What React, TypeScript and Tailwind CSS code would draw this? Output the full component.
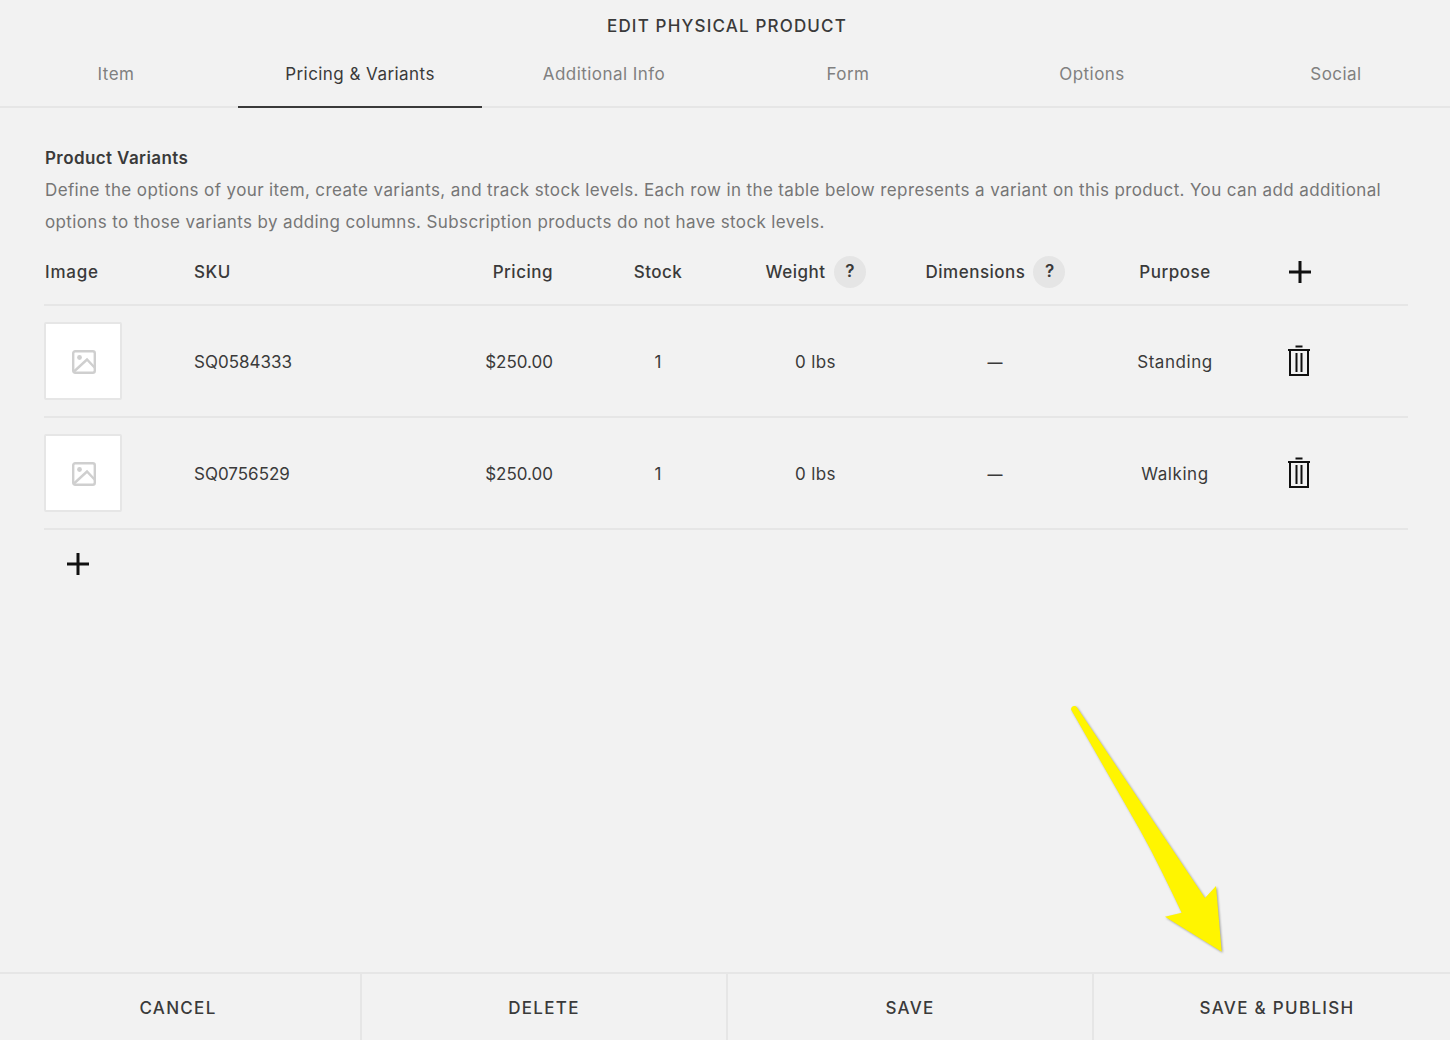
const tabs = ["Item", "Pricing & Variants", "Additional Info", "Form", "Options", "Social"];

const variants = [
  { sku: "SQ0584333", price: "$250.00", stock: "1", weight: "0 lbs", purpose: "Standing" },
  { sku: "SQ0756529", price: "$250.00", stock: "1", weight: "0 lbs", purpose: "Walking" },
];

const COLS = "grid grid-cols-[150px_200px_159px_210px_104px_256px_104px_144px] items-center";

function PlusIcon() {
  return (
    <svg width="24" height="24" viewBox="0 0 24 24" className="block">
      <path d="M1 12H23M12 1V23" stroke="#111" strokeWidth="3" fill="none" />
    </svg>
  );
}

function TrashIcon() {
  return (
    <svg width="24" height="32" viewBox="0 0 24 32" className="block">
      <path d="M8.5 1.5H15.5M1 5H23M3 5V30H21V5M9.5 8V27M14.5 8V27" stroke="#111" strokeWidth="2" fill="none" />
    </svg>
  );
}

function ImageIcon() {
  return (
    <svg width="24" height="24" viewBox="0 0 24 24" className="block">
      <rect x="1.2" y="1.2" width="21.6" height="21.6" rx="2" stroke="#cfcfcf" strokeWidth="2.4" fill="none" />
      <circle cx="7.5" cy="7.5" r="2.4" fill="#cfcfcf" />
      <path d="M2 21.5L15 9.5L23 18" stroke="#cfcfcf" strokeWidth="2.4" fill="none" />
    </svg>
  );
}

function HelpBadge() {
  return (
    <span className="flex h-8 w-8 items-center justify-center rounded-full bg-[#e5e5e5] pl-[1px] text-[17px] font-semibold text-[#3a3a3a]">
      ?
    </span>
  );
}

function Arrow() {
  return (
    <svg width="180" height="270" viewBox="0 0 180 270" className="absolute left-[1060px] top-[700px] drop-shadow-[1px_1px_1px_rgba(0,0,0,0.35)]">
      <path
        d="M11 9.5C11 6 15 5 17 7.5L145 198L156 186L161.7 251.7L105 216.7L121.7 212.7C108 184 95 157 80 130L11 9.5Z"
        fill="#fff500"
      />
    </svg>
  );
}

export default function App() {
  return (
    <div className="relative flex h-[1040px] w-[1450px] flex-col overflow-hidden bg-[#f2f2f2] font-['Inter',sans-serif] text-[17px] text-[#3a3a3a]">
      <div className="pt-[16px] pl-[4px] text-center text-[17px] leading-[20px] font-medium tracking-[1.17px] text-[#3a3a3a]">
        EDIT PHYSICAL PRODUCT
      </div>

      <div className="mt-[12px] h-[60px] border-b-2 border-[#e6e6e6]">
        <div className="ml-[-6px] grid w-[1464px] grid-cols-6 tracking-[0.45px]">
          {tabs.map((tab) => (
            <div
              key={tab}
              className={
                "flex h-[60px] items-center justify-center " +
                (tab === "Pricing & Variants" ? "border-b-2 border-[#3a3a3a] pb-[4px] text-[#3a3a3a]" : "pb-[6px] text-[#808080]")
              }
            >
              {tab}
            </div>
          ))}
        </div>
      </div>

      <div className="pt-[38px] pr-[42px] pl-[44px]">
        <h2 className="pl-[1px] text-[17px] leading-[24px] font-semibold tracking-[0.4px] text-[#3a3a3a]">Product Variants</h2>
        <p className="mt-[4px] w-[1364px] pl-[1px] leading-[32px] tracking-[0.38px] text-[#767676]">
          Define the options of your item, create variants, and track stock levels. Each row in the table below represents a variant on this product. You can add additional options to those variants by adding columns. Subscription products do not have stock levels.
        </p>

        <div className={COLS + " mt-[2px] h-[66px] border-b-2 border-[#e6e6e6] font-medium tracking-[0.5px]"}>
          <div className="pt-[2px] pl-[1px] tracking-[0.8px]">Image</div>
          <div className="pt-[2px]">SKU</div>
          <div className="pt-[2px] text-right">Pricing</div>
          <div className="pt-[2px] text-center">Stock</div>
          <div className="flex items-center justify-center gap-2 pl-[1px]"><span className="pt-[2px]">Weight</span> <HelpBadge /></div>
          <div className="flex items-center justify-center gap-2 pl-[1px]"><span className="pt-[2px]">Dimensions</span> <HelpBadge /></div>
          <div className="pt-[2px] text-center">Purpose</div>
          <div className="flex justify-center pl-[2px]"><PlusIcon /></div>
        </div>

        {variants.map((v) => (
          <div key={v.sku} className={COLS + " h-[112px] border-b-2 border-[#e6e6e6]"}>
            <div className="flex h-[78px] w-[78px] items-center justify-center rounded-[2px] border-2 border-[#e6e6e6] bg-white pt-[1px] pl-[1px]">
              <ImageIcon />
            </div>
            <div className="pt-[4px]">{v.sku}</div>
            <div className="pt-[4px] text-right">{v.price}</div>
            <div className="pt-[4px] text-center">{v.stock}</div>
            <div className="pt-[4px] pl-[1px] text-center tracking-[0.4px]">{v.weight}</div>
            <div className="pt-[4px] text-center text-[15px] font-medium text-[#3a3a3a]">—</div>
            <div className="pt-[4px] text-center tracking-[0.55px]">{v.purpose}</div>
            <div className="flex justify-center"><TrashIcon /></div>
          </div>
        ))}

        <div className="mt-[22px] ml-[22px]"><PlusIcon /></div>
      </div>

      <div className="mt-auto h-[68px] border-t-2 border-[#e6e6e6]">
        <div className="ml-[-4px] grid h-full w-[1464px] grid-cols-4 text-[17px] font-medium tracking-[1.3px]">
          {["CANCEL", "DELETE", "SAVE", "SAVE & PUBLISH"].map((label, i) => (
            <div
              key={label}
              className={"flex items-center justify-center pt-[4px] " + (i < 3 ? "border-r-2 border-[#e6e6e6]" : "")}
            >
              {label}
            </div>
          ))}
        </div>
      </div>

      <Arrow />
    </div>
  );
}
